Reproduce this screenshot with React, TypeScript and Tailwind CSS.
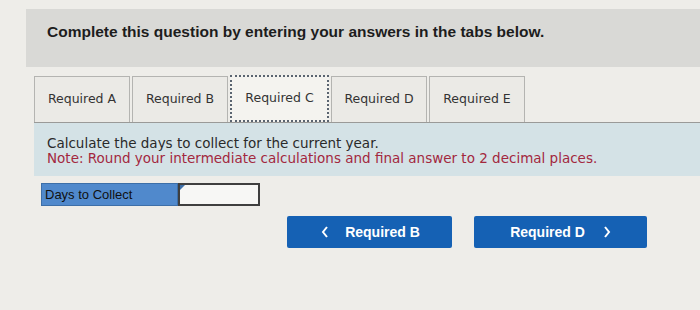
import React from "react";

const tabs = ["Required A", "Required B", "Required C", "Required D", "Required E"];

export default function App() {
  const active = 2;
  return (
    <div className="w-[700px] h-[310px] bg-[#eeede9] overflow-hidden font-['Liberation_Sans',Arial,sans-serif] text-[#222]">
      <div className="ml-[26px] mt-[9px] h-[58px] bg-[#d9d9d6] pl-[21px] pt-[14px]">
        <h1 className="text-[15.5px] leading-[18px] font-bold text-[#1d1d1d]">
          Complete this question by entering your answers in the tabs below.
        </h1>
      </div>

      <div className="ml-[34px] mt-[9px]">
        <div className="flex items-end h-[47px] border-b border-[#9a9a98]">
          {tabs.map((t, i) => (
            <div
              key={t}
              className={
                i === active
                  ? "h-[47px] w-[99px] mr-[2px] flex items-center justify-center bg-[#f4f3ef] border-2 border-dotted border-[#5a6470] font-['DejaVu_Sans',Verdana,sans-serif] text-[12.5px] text-[#333]"
                  : "h-[46px] w-[96px] mr-[2px] flex items-center justify-center bg-[#ebeae6] border border-b-0 border-[#b4b4b1] font-['DejaVu_Sans',Verdana,sans-serif] text-[12.5px] text-[#333]"
              }
            >
              {t}
            </div>
          ))}
        </div>

        <div className="h-[53px] bg-[#d4e2e6] pl-[13px] pt-[13px] font-['DejaVu_Sans',Verdana,sans-serif] text-[13.5px] leading-[15px]">
          <p className="text-[#2a2a2a]">Calculate the days to collect for the current year.</p>
          <p className="text-[#a3283e]">
            Note: Round your intermediate calculations and final answer to 2 decimal places.
          </p>
        </div>

        <div className="flex mt-[7px] ml-[7px] h-[23px]">
          <div className="w-[137px] bg-[#5089cc] border border-[#3d6fa8] text-[13px] text-[#111] pl-[3px] flex items-center">
            Days to Collect
          </div>
          <div className="relative w-[82px] bg-[#f7f7f5] border-2 border-[#3f3f3f]">
            <span className="absolute left-0 top-0 w-0 h-0 border-t-[5px] border-t-[#3d6fa8] border-r-[5px] border-r-transparent" />
          </div>
        </div>

        <div className="flex mt-[10px] ml-[253px] gap-[22px]">
          <button className="w-[165px] h-[32px] bg-[#1561b4] rounded-[2px] text-white font-bold text-[14px] flex items-center justify-center gap-[16px] pl-[2px]">
            <svg width="8" height="12" viewBox="0 0 8 12" fill="none" stroke="white" strokeWidth="2">
              <path d="M6 1 L2 6 L6 11" />
            </svg>
            <span>Required B</span>
          </button>
          <button className="w-[173px] h-[32px] bg-[#1561b4] rounded-[2px] text-white font-bold text-[14px] flex items-center justify-center gap-[18px]">
            <span>Required D</span>
            <svg width="8" height="12" viewBox="0 0 8 12" fill="none" stroke="white" strokeWidth="2">
              <path d="M2 1 L6 6 L2 11" />
            </svg>
          </button>
        </div>
      </div>
    </div>
  );
}
